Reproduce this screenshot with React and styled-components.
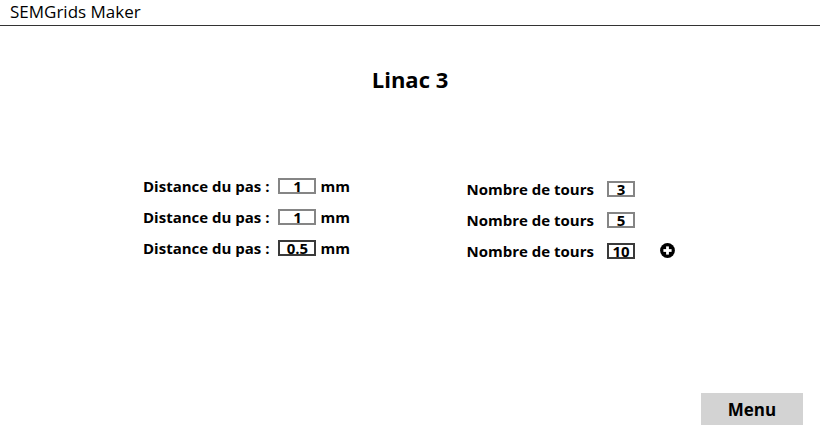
import React from "react";
import styled, { createGlobalStyle } from "styled-components";

const GlobalStyle = createGlobalStyle`
  html, body { margin: 0; padding: 0; background: #fff; }
  body { font-family: "Open Sans", "Noto Sans", sans-serif; color: #000; }
`;

const Page = styled.div`
  width: 820px;
  height: 440px;
  display: flex;
  flex-direction: column;
  overflow: hidden;
`;

const TopBar = styled.header`
  height: 26px;
  border-bottom: 1px solid #333;
  display: flex;
  align-items: center;
  padding: 0 0 2px 10px;
  font-size: 17px;
  box-sizing: border-box;
`;

const Title = styled.h1`
  margin: 38px 0 0;
  text-align: center;
  font-size: 22px;
  font-weight: 700;
  line-height: 30px;
`;

const Fields = styled.div`
  width: 532px;
  margin: 83px 0 0 143px;
  display: flex;
  justify-content: space-between;
`;

const Column = styled.div`
  display: flex;
  flex-direction: column;
  gap: 14px;
  padding-top: ${p => p.$offset || 0}px;
`;

const Row = styled.div`
  display: flex;
  align-items: center;
  height: 17px;
  font-size: 15px;
  font-weight: 700;
`;

const Label = styled.span`
  margin-right: ${p => p.$gap}px;
  white-space: nowrap;
`;

const Box = styled.span`
  box-sizing: border-box;
  width: ${p => p.$w}px;
  height: 16px;
  padding-top: 2px;
  border: 2px solid ${p => (p.$dark ? "#3a3a3a" : "#858585")};
  display: flex;
  align-items: center;
  justify-content: center;
  font-size: 15px;
  font-weight: 700;
  line-height: 1;
`;

const Unit = styled.span`
  margin-left: 4px;
`;

const AddButton = styled.button`
  margin-left: 25px;
  width: 15px;
  height: 15px;
  padding: 0;
  border: 0;
  background: none;
  display: flex;
  cursor: pointer;
`;

const Footer = styled.div`
  margin-top: auto;
  display: flex;
  justify-content: flex-end;
  padding: 0 17px 15px 0;
`;

const MenuButton = styled.button`
  width: 102px;
  height: 32px;
  border: 0;
  background: #d3d3d3;
  font-family: "Open Sans", "Noto Sans", sans-serif;
  font-size: 17px;
  font-weight: 700;
  cursor: pointer;
`;

const PlusIcon = () => (
  <svg width="15" height="15" viewBox="0 0 15 15">
    <circle cx="7.5" cy="7.5" r="7.4" fill="#000" />
    <rect x="6.1" y="3.4" width="2.8" height="8.2" fill="#fff" />
    <rect x="3.4" y="6.1" width="8.2" height="2.8" fill="#fff" />
  </svg>
);

const distances = [
  { value: "1" },
  { value: "1" },
  { value: "0.5", dark: true },
];

const tours = [
  { value: "3" },
  { value: "5" },
  { value: "10", dark: true },
];

export default function App() {
  return (
    <>
      <GlobalStyle />
      <Page>
        <TopBar>SEMGrids Maker</TopBar>
        <Title>Linac 3</Title>
        <Fields>
          <Column>
            {distances.map((d, i) => (
              <Row key={i}>
                <Label $gap={9}>Distance du pas :</Label>
                <Box $w={38} $dark={d.dark}>{d.value}</Box>
                <Unit>mm</Unit>
              </Row>
            ))}
          </Column>
          <Column $offset={3}>
            {tours.map((t, i) => (
              <Row key={i}>
                <Label $gap={13}>Nombre de tours</Label>
                <Box $w={28} $dark={t.dark}>{t.value}</Box>
                {i === tours.length - 1 && (
                  <AddButton aria-label="ajouter">
                    <PlusIcon />
                  </AddButton>
                )}
              </Row>
            ))}
          </Column>
        </Fields>
        <Footer>
          <MenuButton>Menu</MenuButton>
        </Footer>
      </Page>
    </>
  );
}
